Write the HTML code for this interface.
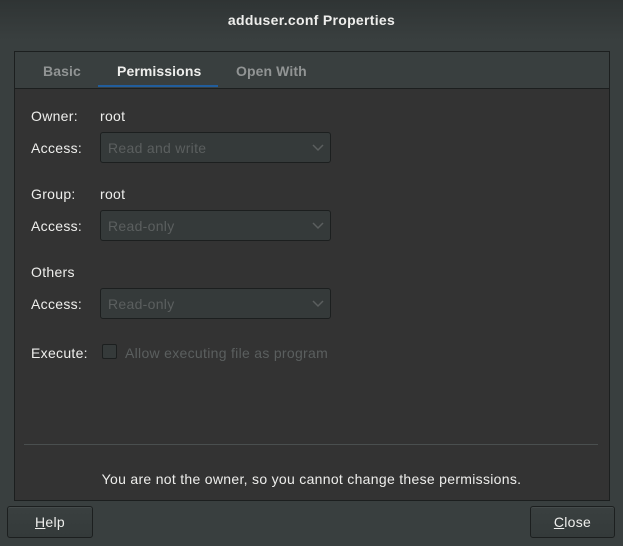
<!DOCTYPE html>
<html><head><style>
body{margin:0;width:623px;height:546px;overflow:hidden;background:#393f3f;font-family:"Liberation Sans",sans-serif;font-size:14px;letter-spacing:0.3px;color:#eeeeec;position:relative}
.abs{position:absolute}
.title{left:0;top:0;width:623px;height:40px;background:linear-gradient(#2f3434,#393f3f);text-align:center;line-height:40px;font-weight:bold;font-size:14px;color:#eeeeec}
.nb{left:14px;top:51px;width:594px;height:448px;border:1px solid #1c1f1f;background:#333333}
.tabs{left:0;top:0;width:594px;height:36px;background:#393f3f;border-bottom:1px solid #1c1f1f}
.tab{top:0;height:36px;line-height:38px;font-weight:bold;color:#919494;letter-spacing:0.1px}
.lbl{left:31px}
.val{left:100px}
.combo{left:100px;width:229px;height:29px;border:1px solid #1c1f1f;border-radius:3px;background:#353a3a;color:#5b5f5f;line-height:31px;text-indent:7px}
.combo svg{position:absolute;right:6px;top:11px}
.btn{height:30px;border:1px solid #1c1f1f;border-radius:3px;background:linear-gradient(#3a4040,#343a3a);text-align:center;line-height:31px;box-shadow:inset 0 1px #454b4b}
</style></head><body>
<div class="abs title">adduser.conf Properties</div>
<div class="abs nb">
 <div class="abs tabs">
  <div class="abs tab" style="left:28px">Basic</div>
  <div class="abs tab" style="left:102px;color:#eeeeec">Permissions</div>
  <div class="abs" style="left:83px;top:33px;width:120px;height:2px;background:#215d9c"></div>
  <div class="abs tab" style="left:221px">Open With</div>
 </div>
</div>
<div class="abs lbl" style="top:108px">Owner:</div><div class="abs val" style="top:108px">root</div>
<div class="abs lbl" style="top:140px">Access:</div>
<div class="abs combo" style="top:132px">Read and write<svg width="12" height="8"><path d="M1 1l5 5 5-5" stroke="#5b5f5f" stroke-width="1.5" fill="none"/></svg></div>
<div class="abs lbl" style="top:186px">Group:</div><div class="abs val" style="top:186px">root</div>
<div class="abs lbl" style="top:218px">Access:</div>
<div class="abs combo" style="top:210px">Read-only<svg width="12" height="8"><path d="M1 1l5 5 5-5" stroke="#5b5f5f" stroke-width="1.5" fill="none"/></svg></div>
<div class="abs lbl" style="top:264px">Others</div>
<div class="abs lbl" style="top:296px">Access:</div>
<div class="abs combo" style="top:288px">Read-only<svg width="12" height="8"><path d="M1 1l5 5 5-5" stroke="#5b5f5f" stroke-width="1.5" fill="none"/></svg></div>
<div class="abs lbl" style="top:345px">Execute:</div>
<div class="abs" style="left:102px;top:344px;width:13px;height:13px;border:1px solid #1c1f1f;border-radius:2px;background:#353a3a"></div>
<div class="abs" style="left:125px;top:345px;color:#5b5f5f">Allow executing file as program</div>
<div class="abs" style="left:24px;top:444px;width:574px;height:1px;background:#4a4f4f"></div>
<div class="abs" style="left:0;width:623px;top:471px;text-align:center">You are not the owner, so you cannot change these permissions.</div>
<div class="abs btn" style="left:7px;top:506px;width:84px"><u>H</u>elp</div>
<div class="abs btn" style="left:530px;top:506px;width:83px"><u>C</u>lose</div>
</body></html>
